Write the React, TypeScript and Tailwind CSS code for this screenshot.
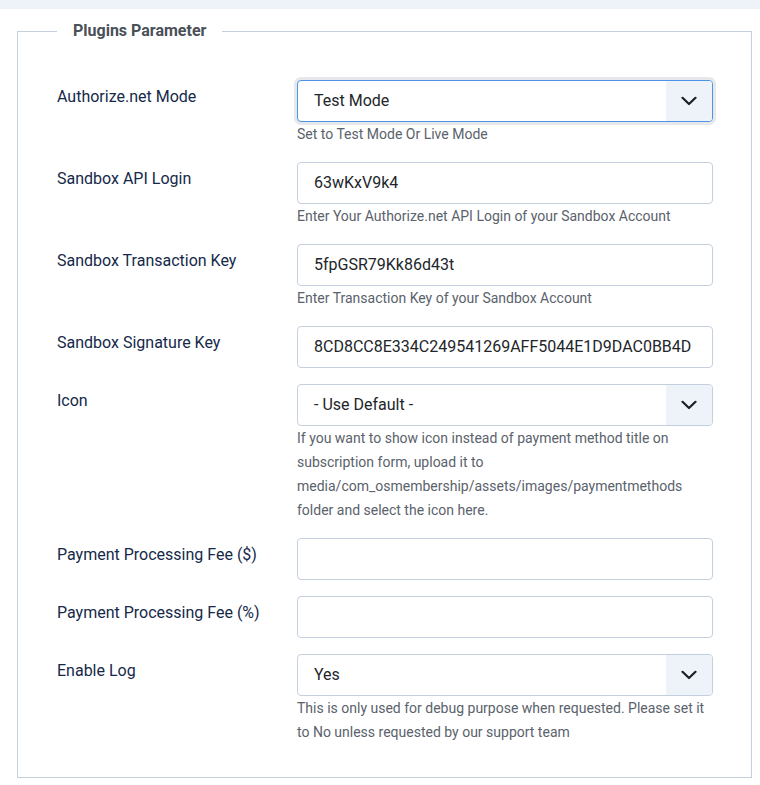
import React from "react";

const Chevron = () => (
  <svg width="16" height="10" viewBox="0 0 16 10" fill="none">
    <polyline points="1.5,1.8 8,8 14.5,1.8" stroke="#1b1f24" strokeWidth="2.2" strokeLinecap="round" strokeLinejoin="round" />
  </svg>
);

function Select({ value, focused }: { value: string; focused?: boolean }) {
  return (
    <div
      className={
        "flex h-[42px] w-[416px] items-stretch overflow-hidden rounded-[4px] border bg-white " +
        (focused ? "border-[#4d94e6] shadow-[0_0_0_3px_#e6e8eb]" : "border-[#c5d0de]")
      }
    >
      <div className="flex flex-1 items-center pl-[16px] text-[16px] text-[#22262a]">{value}</div>
      <div className="flex w-[46px] items-center justify-center bg-[#eef3fa]">
        <Chevron />
      </div>
    </div>
  );
}

function Input({ value }: { value: string }) {
  return (
    <div className="flex h-[42px] w-[416px] items-center overflow-hidden whitespace-nowrap rounded-[4px] border border-[#c5d0de] bg-white pl-[16px] pr-[16px] text-[16px] text-[#22262a]">
      <span className="overflow-hidden">{value}</span>
    </div>
  );
}

function Row({ label, children, help }: { label: string; children: React.ReactNode; help?: React.ReactNode }) {
  return (
    <div className="mb-4 flex">
      <div className="w-[240px] shrink-0 pt-[5px] text-[16px] leading-6 text-[#15294a]">{label}</div>
      <div className="w-[416px]">
        {children}
        {help && <div className="text-[14px] leading-6 text-[#5a626b]">{help}</div>}
      </div>
    </div>
  );
}

export default function App() {
  return (
    <div className="min-h-[785px] w-[760px] bg-white" style={{ fontFamily: "Roboto, 'Liberation Sans', sans-serif" }}>
      <div className="h-[9px] bg-[#eef3fa]" />
      <fieldset className="ml-[17px] mt-[10px] w-[735px] rounded-none border border-[#c5d0de] pb-[17px] pl-[39px] pt-[37px]">
        <legend className="px-4 text-[16px] font-bold leading-6 text-[#4a5058]">Plugins Parameter</legend>
        <Row label="Authorize.net Mode" help="Set to Test Mode Or Live Mode">
          <Select value="Test Mode" focused />
        </Row>
        <Row label="Sandbox API Login" help="Enter Your Authorize.net API Login of your Sandbox Account">
          <Input value="63wKxV9k4" />
        </Row>
        <Row label="Sandbox Transaction Key" help="Enter Transaction Key of your Sandbox Account">
          <Input value="5fpGSR79Kk86d43t" />
        </Row>
        <Row label="Sandbox Signature Key">
          <Input value="8CD8CC8E334C249541269AFF5044E1D9DAC0BB4D" />
        </Row>
        <Row
          label="Icon"
          help={
            <>
              If you want to show icon instead of payment method title on subscription form, upload it to
              media/com_osmembership/assets/images/paymentmethods folder and select the icon here.
            </>
          }
        >
          <Select value="- Use Default -" />
        </Row>
        <Row label="Payment Processing Fee ($)">
          <Input value="" />
        </Row>
        <Row label="Payment Processing Fee (%)">
          <Input value="" />
        </Row>
        <Row
          label="Enable Log"
          help="This is only used for debug purpose when requested. Please set it to No unless requested by our support team"
        >
          <Select value="Yes" />
        </Row>
      </fieldset>
    </div>
  );
}
